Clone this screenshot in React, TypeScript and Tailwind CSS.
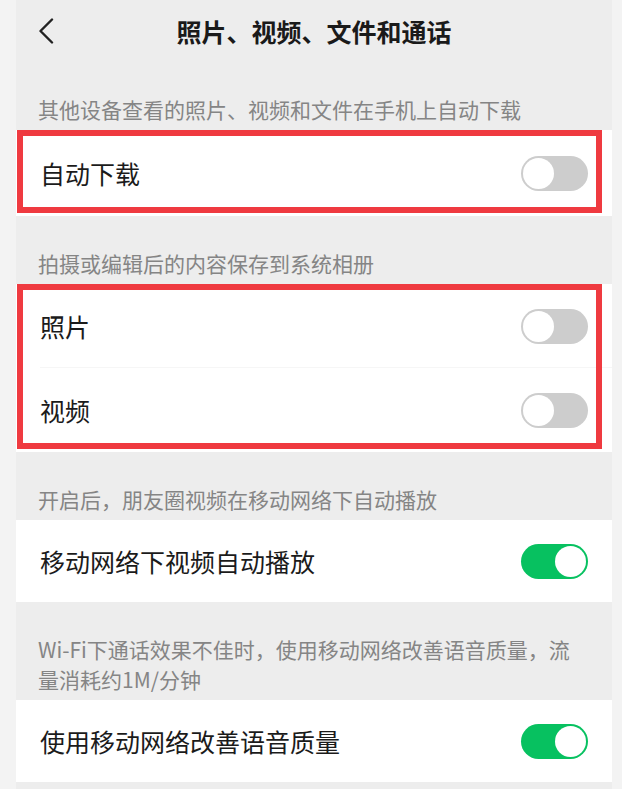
import React from "react";

const FONT = { fontFamily: '"Noto Sans CJK SC", "Noto Sans", sans-serif' };

function Toggle({ on }: { on: boolean }) {
    return on ? (
        <div className="w-[67px] h-[35px] rounded-full bg-[#07c160] flex items-center justify-end p-[2px]">
            <div className="w-[31px] h-[31px] rounded-full bg-white" />
        </div>
    ) : (
        <div className="w-[67px] h-[35px] rounded-full bg-[#cdcdcd] flex items-center justify-start p-[2px]">
            <div className="w-[31px] h-[31px] rounded-full bg-white" />
        </div>
    );
}

function Row({ label, on, divider }: { label: string; on: boolean; divider?: boolean }) {
    return (
        <div className="relative flex items-center justify-between h-[84px] pl-6 pr-6">
            <span className="text-[25px] text-[#1b1b1b] leading-none">{label}</span>
            <Toggle on={on} />
            {divider && <div className="absolute bottom-0 left-6 right-0 h-px bg-[#f6f6f6]" />}
        </div>
    );
}

function SectionLabel({ children }: { children: React.ReactNode }) {
    return (
        <div className="pt-[32px] pb-[6px] pl-[22px] pr-6 text-[21px] leading-[30px] text-[#858585]">
            {children}
        </div>
    );
}

// red annotation box drawn over a card
function Marked({ children }: { children: React.ReactNode }) {
    return (
        <div className="relative bg-white">
            {children}
            <div className="absolute left-px right-[10px] top-0 bottom-[3px] border-[6px] border-[#ef3a40] pointer-events-none" />
        </div>
    );
}

export default function App() {
    return (
        <div className="w-[622px] h-[789px] overflow-hidden bg-[#f3f3f3]" style={FONT}>
            <div className="ml-4 w-[596px] h-full bg-[#ededed]">
                {/* Nav bar */}
                <div className="grid grid-cols-[1fr_auto_1fr] items-center h-[62px]">
                    <div className="pl-[22px]">
                        <svg width="16" height="26" viewBox="0 0 16 26" fill="none">
                            <path d="M14 1.5 L2.5 13 L14 24.5" stroke="#222" strokeWidth="2.4" strokeLinecap="round" strokeLinejoin="round" />
                        </svg>
                    </div>
                    <h1 className="text-[25px] font-semibold text-[#1a1a1a] leading-none">照片、视频、文件和通话</h1>
                    <div />
                </div>

                <SectionLabel>其他设备查看的照片、视频和文件在手机上自动下载</SectionLabel>
                <Marked>
                    <div className="h-[86px] flex flex-col justify-center">
                        <Row label="自动下载" on={false} />
                    </div>
                </Marked>

                <SectionLabel>拍摄或编辑后的内容保存到系统相册</SectionLabel>
                <Marked>
                    <Row label="照片" on={false} divider />
                    <Row label="视频" on={false} />
                </Marked>

                <SectionLabel>开启后，朋友圈视频在移动网络下自动播放</SectionLabel>
                <div className="bg-white h-[82px] flex flex-col justify-center">
                    <Row label="移动网络下视频自动播放" on />
                </div>

                <SectionLabel>
                    Wi-Fi下通话效果不佳时，使用移动网络改善语音质量，流
                    <br />
                    量消耗约1M/分钟
                </SectionLabel>
                <div className="bg-white h-[82px] flex flex-col justify-center">
                    <Row label="使用移动网络改善语音质量" on />
                </div>
            </div>
        </div>
    );
}
